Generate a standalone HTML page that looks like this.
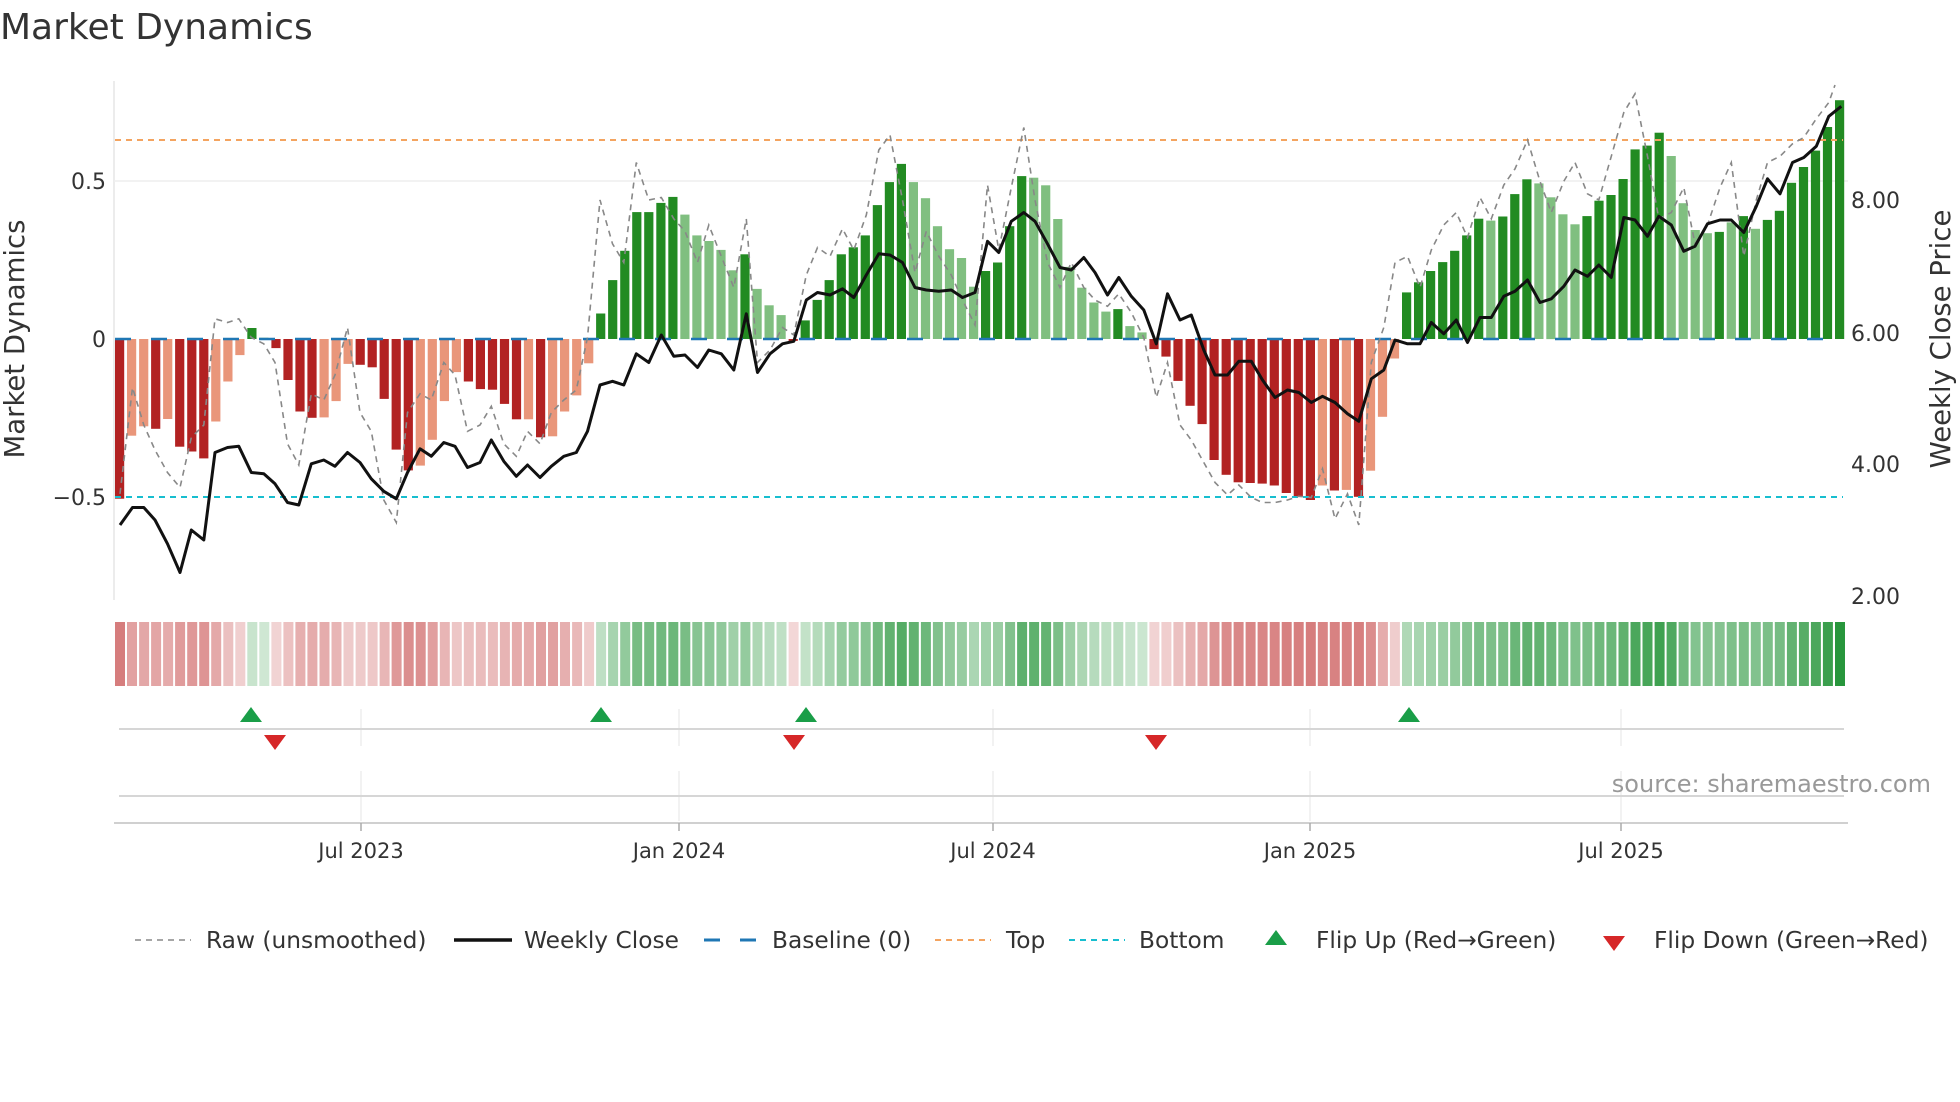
<!DOCTYPE html>
<html><head><meta charset="utf-8">
<style>
html,body{margin:0;padding:0;background:#fff;}
body{width:1960px;height:1102px;overflow:hidden;}
svg{display:block;font-family:"DejaVu Sans","Liberation Sans",sans-serif;}
</style></head>
<body>
<svg id="s" width="1960" height="1102" viewBox="0 0 1960 1102" xmlns="http://www.w3.org/2000/svg">
<text x="0" y="39" font-size="36" fill="#333">Market Dynamics</text>
<line x1="114" y1="81" x2="114" y2="600" stroke="#e6e6e6" stroke-width="1.5"/>
<line x1="114" y1="181" x2="1848" y2="181" stroke="#eeeeee" stroke-width="1.5"/>
<g id="bars"></g>
<line x1="115" y1="140" x2="1843" y2="140" stroke="#f4a460" stroke-width="2" stroke-dasharray="6,5"/>
<line x1="115" y1="497" x2="1843" y2="497" stroke="#17becf" stroke-width="2" stroke-dasharray="6,5"/>
<line x1="115" y1="339" x2="1843" y2="339" stroke="#1f77b4" stroke-width="2.5" stroke-dasharray="16,20"/>
<polyline id="raw" fill="none" stroke="#888" stroke-width="1.6" stroke-dasharray="6,5"/>
<polyline id="close" fill="none" stroke="#111" stroke-width="3" stroke-linejoin="round"/>
<g font-size="22" fill="#333" text-anchor="end">
<text x="106" y="189">0.5</text>
<text x="106" y="347">0</text>
<text x="106" y="505">−0.5</text>
</g>
<g font-size="22" fill="#333">
<text x="1851" y="208">8.00</text>
<text x="1851" y="341">6.00</text>
<text x="1851" y="472">4.00</text>
<text x="1851" y="604">2.00</text>
</g>
<text transform="translate(24,339) rotate(-90)" font-size="27.5" fill="#333" text-anchor="middle">Market Dynamics</text>
<text transform="translate(1950,339) rotate(-90)" font-size="27.5" fill="#333" text-anchor="middle">Weekly Close Price</text>
<g id="heat"></g>
<g stroke="#eeeeee" stroke-width="1.5">
<line x1="361" y1="709" x2="361" y2="746"/><line x1="679" y1="709" x2="679" y2="746"/><line x1="993" y1="709" x2="993" y2="746"/><line x1="1310" y1="709" x2="1310" y2="746"/><line x1="1621" y1="709" x2="1621" y2="746"/>
<line x1="361" y1="771" x2="361" y2="821"/><line x1="679" y1="771" x2="679" y2="821"/><line x1="993" y1="771" x2="993" y2="821"/><line x1="1310" y1="771" x2="1310" y2="821"/><line x1="1621" y1="771" x2="1621" y2="821"/>
</g>
<line x1="119" y1="729" x2="1844" y2="729" stroke="#d6d6d6" stroke-width="2"/>
<line x1="119" y1="796" x2="1844" y2="796" stroke="#d6d6d6" stroke-width="2"/>
<line x1="114" y1="823" x2="1848" y2="823" stroke="#d0d0d0" stroke-width="2"/>
<g stroke="#aaa" stroke-width="1.5">
<line x1="361" y1="823" x2="361" y2="831"/><line x1="679" y1="823" x2="679" y2="831"/><line x1="993" y1="823" x2="993" y2="831"/><line x1="1310" y1="823" x2="1310" y2="831"/><line x1="1621" y1="823" x2="1621" y2="831"/>
</g>
<g fill="#1a9e48">
<polygon points="251,707 262,722 240,722"/><polygon points="601,707 612,722 590,722"/><polygon points="806,707 817,722 795,722"/><polygon points="1409,707 1420,722 1398,722"/>
</g>
<g fill="#d62728">
<polygon points="275,750 286,735 264,735"/><polygon points="794,750 805,735 783,735"/><polygon points="1156,750 1167,735 1145,735"/>
</g>
<text x="1931" y="792" font-size="24" fill="#999" text-anchor="end">source: sharemaestro.com</text>
<g font-size="21" fill="#333" text-anchor="middle">
<text x="361" y="858">Jul 2023</text>
<text x="679" y="858">Jan 2024</text>
<text x="993" y="858">Jul 2024</text>
<text x="1310" y="858">Jan 2025</text>
<text x="1621" y="858">Jul 2025</text>
</g>
<g font-size="23.3" fill="#333">
<line x1="135" y1="940" x2="191" y2="940" stroke="#888" stroke-width="1.6" stroke-dasharray="6,5"/>
<text x="206" y="948">Raw (unsmoothed)</text>
<line x1="454" y1="940" x2="512" y2="940" stroke="#111" stroke-width="3.5"/>
<text x="524" y="948">Weekly Close</text>
<line x1="704" y1="940" x2="758" y2="940" stroke="#1f77b4" stroke-width="3" stroke-dasharray="16,20"/>
<text x="772" y="948">Baseline (0)</text>
<line x1="935" y1="940" x2="991" y2="940" stroke="#f4a460" stroke-width="2" stroke-dasharray="6,5"/>
<text x="1006" y="948">Top</text>
<line x1="1069" y1="940" x2="1125" y2="940" stroke="#17becf" stroke-width="2" stroke-dasharray="6,5"/>
<text x="1139" y="948">Bottom</text>
<polygon points="1276,930 1287,945 1265,945" fill="#1a9e48"/>
<text x="1316" y="948">Flip Up (Red→Green)</text>
<polygon points="1614,951 1625,936 1603,936" fill="#d62728"/>
<text x="1654" y="948">Flip Down (Green→Red)</text>
</g>
</svg>
<script>
var V=[-0.507,'D',-0.307,'L',-0.277,'L',-0.285,'D',-0.254,'L',-0.342,'D',-0.357,'D',-0.379,'D',-0.262,'L',-0.135,'L',-0.051,'L',0.035,'D',0.004,'L',-0.029,'D',-0.13,'D',-0.23,'D',-0.25,'D',-0.249,'L',-0.197,'L',-0.079,'L',-0.082,'D',-0.09,'D',-0.19,'D',-0.351,'D',-0.417,'D',-0.402,'L',-0.32,'L',-0.197,'L',-0.105,'L',-0.135,'D',-0.159,'D',-0.161,'D',-0.206,'D',-0.255,'D',-0.255,'L',-0.312,'D',-0.309,'L',-0.23,'L',-0.179,'L',-0.077,'L',
0.081,'D',0.187,'D',0.28,'D',0.403,'D',0.403,'D',0.432,'D',0.451,'D',0.395,'L',0.329,'L',0.311,'L',0.283,'L',0.218,'L',0.269,'D',0.159,'L',0.107,'L',0.076,'L',-0.006,'D',0.059,'D',0.124,'D',0.187,'D',0.269,'D',0.291,'D',0.329,'D',0.425,'D',0.498,'D',0.556,'D',0.498,'L',0.447,'L',0.358,'L',0.285,'L',0.257,'L',0.166,'L',0.216,'D',0.243,'D',0.358,'D',0.517,'D',0.512,'L',0.488,'L',0.381,'L',0.229,'L',0.163,'L',
0.116,'L',0.087,'L',0.095,'D',0.041,'L',0.021,'L',-0.032,'D',-0.056,'D',-0.133,'D',-0.212,'D',-0.27,'D',-0.384,'D',-0.431,'D',-0.455,'D',-0.457,'D',-0.459,'D',-0.465,'D',-0.489,'D',-0.501,'D',-0.511,'D',-0.465,'L',-0.481,'D',-0.479,'L',-0.501,'D',-0.418,'L',-0.247,'L',-0.062,'L',0.148,'D',
0.18,'D',0.216,'D',0.244,'D',0.28,'D',0.329,'D',0.382,'D',0.376,'L',0.389,'D',0.46,'D',0.507,'D',0.494,'L',0.45,'L',0.396,'L',0.364,'L',0.39,'D',0.439,'D',0.457,'D',0.508,'D',0.602,'D',0.614,'D',0.655,'D',0.581,'L',0.431,'L',0.346,'L',0.336,'L',0.34,'D',0.37,'L',0.39,'D',0.35,'L',0.378,'D',0.407,'D',0.496,'D',0.546,'D',0.598,'D',0.673,'D',0.758,'D'];
var n=V.length/2, pitch=(1847-115)/n, ns='http://www.w3.org/2000/svg';
var bars=document.getElementById('bars'), heat=document.getElementById('heat');
function mix(b,t){return 'rgb('+[0,1,2].map(function(k){return Math.round(255*(1-t)+b[k]*t)}).join(',')+')';}
for(var i=0;i<n;i++){
 var v=V[2*i],c=V[2*i+1],x=115+i*pitch;
 var r=document.createElementNS(ns,'rect');
 var h=Math.abs(v)*315;
 r.setAttribute('x',x.toFixed(1));r.setAttribute('width','9.2');
 r.setAttribute('y',(v>=0?339-h:339).toFixed(1));r.setAttribute('height',Math.max(h,0.5).toFixed(1));
 var col=v>=0?(c=='D'?'#228b22':'#80bf80'):(c=='D'?'#b22222':'#e9967a');
 r.setAttribute('fill',col);bars.appendChild(r);
 var q=document.createElementNS(ns,'rect');
 q.setAttribute('x',x.toFixed(1));q.setAttribute('width','10');q.setAttribute('y','622');q.setAttribute('height','64');
 var t=0.22+0.78*Math.min(1,Math.abs(v)/0.76);
 q.setAttribute('fill',v>=0?mix([40,150,60],t):mix([200,80,80],t));heat.appendChild(q);
}
var C=[96,420,106,406,115,406,124,416,134,435,144,458,153,424,163,432,172,362,182,358,191,357,201,378,211,379,220,387,230,402,239,404,249,371,259,368,268,373,278,362,288,370,297,383,307,393,317,399,326,378,336,359,345,365,355,354,364,357,374,374,384,370,393,352,403,369,413,381,422,372,432,382,441,373,451,365,461,362,470,345,480,308,490,305,499,308,509,283,519,290,529,268,539,285,548,284,558,294,567,280,577,283,587,296,597,251,606,298,616,283,626,275,635,273,645,240,654,234,664,236,674,231,683,238,693,220,703,203,712,204,722,210,732,230,741,232,751,233,761,232,770,238,780,234,790,193,799,202,809,177,819,170,828,177,838,195,848,214,857,216,867,206,876,218,886,236,895,222,905,237,915,248,925,275,934,235,944,256,953,252,963,280,972,300,982,300,991,289,1001,289,1010,304,1020,318,1030,312,1039,314,1049,322,1058,317,1068,322,1078,331,1087,337,1097,303,1107,296,1116,272,1126,275,1136,275,1145,258,1155,267,1165,256,1174,274,1184,254,1193,254,1203,237,1212,233,1222,224,1232,242,1241,239,1251,229,1260,216,1270,221,1279,212,1289,222,1299,174,1308,176,1318,189,1327,173,1337,180,1347,201,1356,197,1366,179,1376,176,1385,176,1395,186,1405,165,1414,143,1424,155,1434,130,1443,126,1453,117,1463,93,1473,85];
var R=[96,395,106,310,115,340,124,360,134,378,144,390,153,350,163,340,172,255,182,258,191,255,201,270,211,275,220,290,230,355,239,372,249,315,259,320,268,300,278,262,288,330,297,345,307,400,317,418,326,330,336,315,345,320,355,290,364,300,374,345,384,340,393,325,403,355,413,365,422,345,432,355,441,330,451,320,461,312,470,270,480,160,490,195,499,210,509,130,519,160,529,158,539,175,548,185,558,210,567,180,577,205,587,230,597,175,606,290,616,280,626,262,635,268,645,220,654,198,664,205,674,183,683,200,693,172,703,120,712,108,722,160,732,218,741,185,751,205,761,220,770,240,780,260,790,148,799,200,809,150,819,102,828,160,838,210,848,230,857,210,867,230,876,240,886,245,895,235,905,250,915,270,925,318,934,290,944,340,953,352,963,370,972,386,982,396,991,388,1001,398,1010,402,1020,402,1030,400,1039,397,1049,398,1058,375,1068,415,1078,395,1087,420,1097,290,1107,262,1116,210,1126,205,1136,230,1145,200,1155,180,1165,170,1174,190,1184,158,1193,175,1203,148,1212,135,1222,112,1232,145,1241,170,1251,145,1260,130,1270,155,1279,160,1289,125,1299,90,1308,75,1318,125,1327,175,1337,170,1347,150,1356,195,1366,180,1376,150,1385,130,1395,205,1405,160,1414,130,1424,125,1434,115,1443,110,1453,95,1463,82,1468,68];
function pts(a){var s=[];for(var i=0;i<a.length;i+=2)s.push((a[i]*1.25).toFixed(1)+','+(a[i+1]*1.25).toFixed(1));return s.join(' ');}
document.getElementById('close').setAttribute('points',pts(C));
document.getElementById('raw').setAttribute('points',pts(R));
</script>
</body></html>
